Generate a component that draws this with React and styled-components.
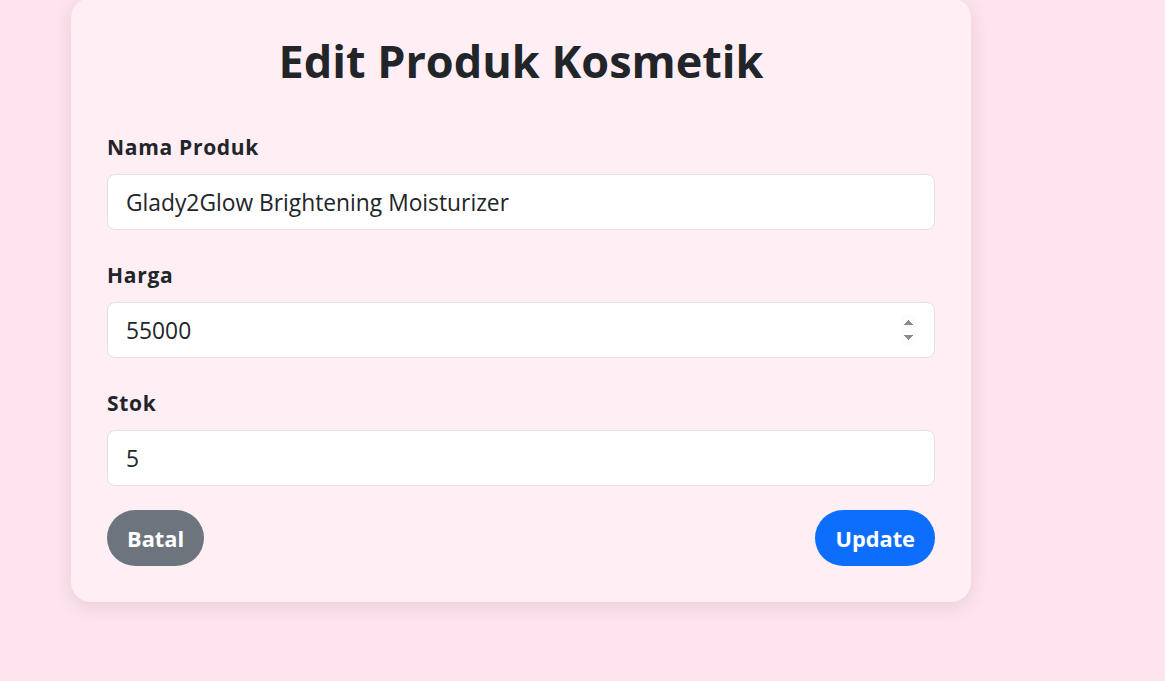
import React from "react";
import styled, { createGlobalStyle } from "styled-components";

const GlobalStyle = createGlobalStyle`
  * { box-sizing: border-box; }
  html, body {
    margin: 0;
    padding: 0;
    background-color: #fde4ef;
    font-family: "Open Sans", "Noto Sans", sans-serif;
    color: #212529;
  }
`;

const Page = styled.div`
  min-height: 100vh;
  padding: 0 0 40px 71px;
`;

const Card = styled.div`
  width: 900px;
  margin-top: -2px;
  padding: 36px;
  background-color: #ffeef4;
  border-radius: 20px;
  box-shadow: 0 4px 18px rgba(120, 60, 90, 0.14);
`;

const Title = styled.h2`
  margin: 0 0 44px;
  font-size: 45px;
  line-height: 54px;
  font-weight: 700;
  text-align: center;
`;

const Field = styled.div`
  display: flex;
  flex-direction: column;
  gap: 12px;
  margin-bottom: ${(p) => (p.$last ? "24px" : "30px")};
`;

const Label = styled.label`
  font-size: 21px;
  line-height: 30px;
  font-weight: 700;
  letter-spacing: 0.7px;
`;

const Input = styled.input`
  width: 100%;
  height: 56px;
  padding: 11px 18px;
  font-family: inherit;
  font-size: 22.8px;
  line-height: 32px;
  color: #212529;
  background-color: #fff;
  border: 1px solid #dee2e6;
  border-radius: 8px;
  outline: none;
  &::-webkit-inner-spin-button {
    opacity: ${(p) => (p.$spin ? 1 : 0)};
    background-color: #f8f8f8;
  }
`;

const Actions = styled.div`
  display: flex;
  justify-content: space-between;
`;

const Button = styled.button`
  height: 56px;
  padding: 0 20px;
  font-family: inherit;
  font-size: 21.8px;
  font-weight: 700;
  color: #fff;
  background-color: ${(p) => (p.$primary ? "#0d6efd" : "#6c757d")};
  border: none;
  border-radius: 28px;
  cursor: pointer;
`;

const App = () => {
  return (
    <Page>
      <GlobalStyle />
      <Card>
        <Title>Edit Produk Kosmetik</Title>
        <Field>
          <Label>Nama Produk</Label>
          <Input type="text" defaultValue="Glady2Glow Brightening Moisturizer" />
        </Field>
        <Field>
          <Label>Harga</Label>
          <Input type="number" defaultValue="55000" $spin />
        </Field>
        <Field $last>
          <Label>Stok</Label>
          <Input type="number" defaultValue="5" />
        </Field>
        <Actions>
          <Button>Batal</Button>
          <Button $primary>Update</Button>
        </Actions>
      </Card>
    </Page>
  );
};

export default App;
